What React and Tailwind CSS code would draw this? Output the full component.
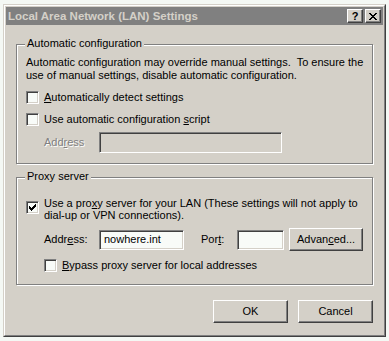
import React from "react";

const raised =
  "border border-t-white border-l-white border-b-[#404040] border-r-[#404040] shadow-[inset_-1px_-1px_0_#808080] bg-[#d4d0c8]";
const sunken =
  "border border-t-[#808080] border-l-[#808080] border-b-white border-r-white shadow-[inset_1px_1px_0_#404040,inset_-1px_-1px_0_#d4d0c8]";

function Check({ checked }) {
  return (
    <div className={`w-[13px] h-[13px] shrink-0 bg-[#f8fbf8] ${sunken} flex items-center justify-center`}>
      {checked && (
        <svg width="7" height="7" viewBox="0 0 7 7" shapeRendering="crispEdges">
          <path d="M0 2h1v3H0zM1 3h1v3H1zM2 4h1v3H2zM3 3h1v3H3zM4 2h1v3H4zM5 1h1v3H5zM6 0h1v3H6z" fill="#000" />
        </svg>
      )}
    </div>
  );
}

function Group({ title, className, children }) {
  return (
    <div className={`relative border border-[#808080] shadow-[1px_1px_0_#fff,inset_1px_1px_0_#fff] ${className}`}>
      <span className="absolute left-[8px] top-[-8px] bg-[#d4d0c8] px-[2px] leading-[13px]">{title}</span>
      {children}
    </div>
  );
}

export default function App() {
  return (
    <div className="w-[389px] h-[341px] bg-[#f4f8f4] pt-[4px] pl-[3px] font-['Liberation_Sans',Arial,sans-serif] text-[11px] leading-[13px] text-black">
      <div className="w-[383px] h-[333px] border border-t-[#d4d0c8] border-l-[#d4d0c8] border-b-[#404040] border-r-[#404040] bg-[#d4d0c8]">
        <div className="h-full border border-t-white border-l-white border-b-[#808080] border-r-[#808080] p-[1px] flex flex-col">
          <div className="h-[18px] bg-[#808080] flex items-center pl-[2px] pr-[2px]">
            <span className="font-bold text-[11.5px] text-[#d4d0c8] flex-1">Local Area Network (LAN) Settings</span>
            <div className={`w-[16px] h-[14px] ${raised} flex items-center justify-center font-bold text-[11px] leading-none`}>?</div>
            <div className={`w-[16px] h-[14px] ml-[2px] ${raised} flex items-center justify-center`}>
              <svg width="8" height="7" viewBox="0 0 8 7" shapeRendering="crispEdges">
                <path d="M0 0h2v1h1v1h2V1h1V0h2v1H7v1H6v1H5v1h1v1h1v1h1v1H6V6H5V5H3v1H2v1H0V6h1V5h1V4h1V3H2V2H1V1H0z" fill="#000" />
              </svg>
            </div>
          </div>

          <div className="pl-[10px] pr-[10px] pt-[19px]">
            <Group title="Automatic configuration" className="h-[120px] pt-[11px] pl-[9px]">
              <div>
                Automatic configuration may override manual settings.&nbsp; To ensure the
                <br />
                use of manual settings, disable automatic configuration.
              </div>
              <div className="flex items-center gap-[5px] mt-[9px]">
                <Check />
                <span>
                  <u>A</u>utomatically detect settings
                </span>
              </div>
              <div className="flex items-center gap-[5px] mt-[9px]">
                <Check />
                <span>
                  Use automatic configuration <u>s</u>cript
                </span>
              </div>
              <div className="flex items-center mt-[6px] pl-[18px]">
                <span className="w-[55px] text-[#808080] [text-shadow:1px_1px_0_#fff]">
                  Add<u>r</u>ess
                </span>
                <div className={`w-[183px] h-[21px] ${sunken}`} />
              </div>
            </Group>

            <Group title="Proxy server" className="h-[108px] mt-[13px] pt-[19px] pl-[9px]">
              <div className="flex items-start gap-[5px]">
                <div className="mt-[4px]">
                  <Check checked />
                </div>
                <span className="leading-[12px]">
                  Use a pro<u>x</u>y server for your LAN (These settings will not apply to
                  <br />
                  dial-up or VPN connections).
                </span>
              </div>
              <div className="flex items-center mt-[7px] pl-[18px]">
                <span className="w-[55px]">
                  Addr<u>e</u>ss:
                </span>
                <div className={`w-[85px] h-[20px] ${sunken} bg-[#f8fbf8] pl-[4px] flex items-center`}>nowhere.int</div>
                <span className="ml-[17px] w-[36px]">
                  Por<u>t</u>:
                </span>
                <div className={`w-[47px] h-[20px] ${sunken} bg-[#f8fbf8]`} />
                <div className={`ml-[5px] w-[74px] h-[23px] ${raised} flex items-center justify-center`}>
                  <span>
                    Advan<u>c</u>ed...
                  </span>
                </div>
              </div>
              <div className="flex items-center gap-[5px] mt-[8px] pl-[18px]">
                <Check />
                <span>
                  <u>B</u>ypass proxy server for local addresses
                </span>
              </div>
            </Group>

            <div className="flex justify-end gap-[10px] mt-[15px] pr-[0px]">
              <div className={`w-[75px] h-[23px] ${raised} flex items-center justify-center`}>OK</div>
              <div className={`w-[75px] h-[23px] ${raised} flex items-center justify-center`}>Cancel</div>
            </div>
          </div>
        </div>
      </div>
    </div>
  );
}
